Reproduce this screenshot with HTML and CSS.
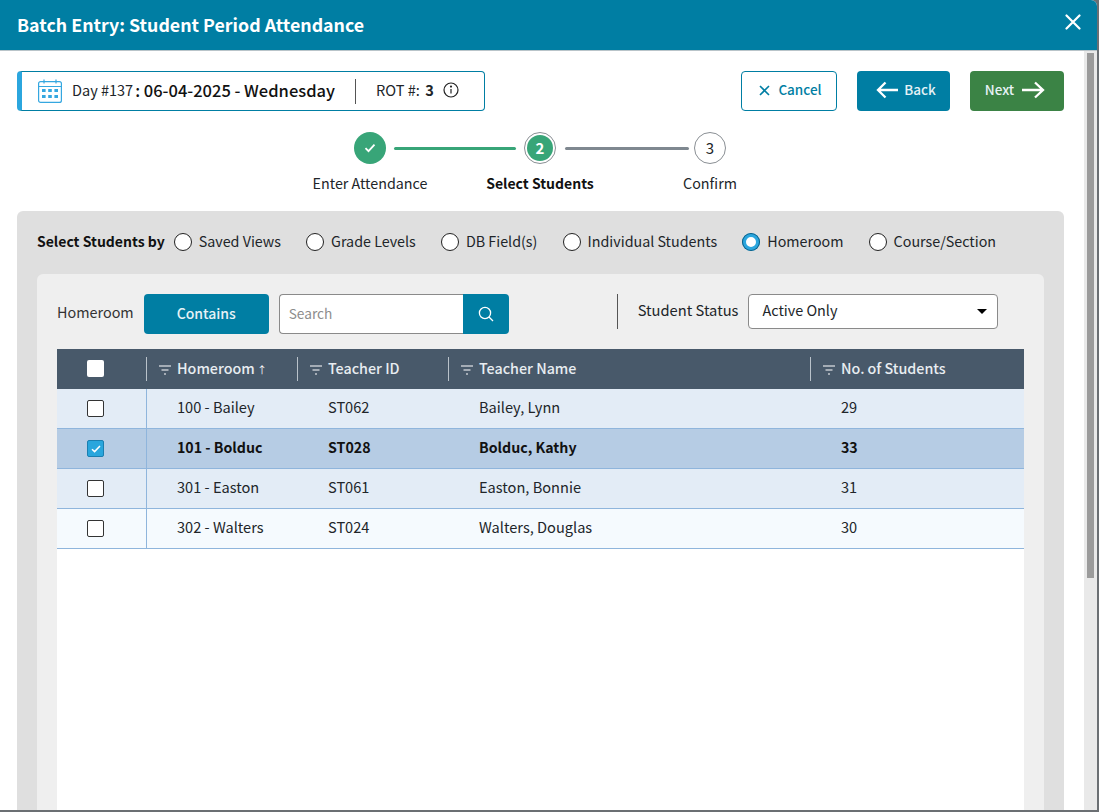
FILE: index.html
```html
<!DOCTYPE html>
<html lang="en">
<head>
<meta charset="utf-8">
<title>Batch Entry: Student Period Attendance</title>
<link rel="stylesheet" href="styles.css">
</head>
<body>
<div class="modal">
  <header class="modal-head">
    <h1 class="modal-title">Batch Entry: Student Period Attendance</h1>
    <svg class="close-icon" width="16" height="16" viewBox="0 0 16 16"><path d="M1.5 1.5l13 13M14.5 1.5l-13 13" stroke="#fff" stroke-width="2.2" stroke-linecap="round" fill="none"/></svg>
  </header>
  <div class="modal-main">
    <div class="content">
      <div class="topbar">
        <div class="daybox">
          <svg class="cal" width="24" height="24" viewBox="0 0 24 24" fill="none" stroke="#35a7e0" stroke-width="1.2"><rect x="0.6" y="2.6" width="22.8" height="20.8" rx="2"/><path d="M0.6 7.5h22.8M6 0.5v4M18 0.5v4"/><g fill="#35a7e0" stroke="none"><rect x="4" y="10" width="3.6" height="3"/><rect x="10.2" y="10" width="3.6" height="3"/><rect x="16.4" y="10" width="3.6" height="3"/><rect x="4" y="16" width="3.6" height="3"/><rect x="10.2" y="16" width="3.6" height="3"/><rect x="16.4" y="16" width="3.6" height="3"/></g></svg>
          <span class="day-num">Day #137</span>
          <span class="day-date">: 06-04-2025 - Wednesday</span>
          <span class="day-sep"></span>
          <span class="rot">ROT #: <b>3</b></span>
          <svg class="info" width="16" height="16" viewBox="0 0 16 16" fill="none" stroke="#222" stroke-width="1.2"><circle cx="8" cy="8" r="7"/><path d="M8 7v4.5"/><circle cx="8" cy="4.6" r="0.5" fill="#222"/></svg>
        </div>
        <div class="actions">
          <button class="btn btn-cancel"><svg width="11" height="11" viewBox="0 0 11 11"><path d="M1 1l9 9M10 1l-9 9" stroke="#007ea3" stroke-width="1.6" fill="none"/></svg><span>Cancel</span></button>
          <button class="btn btn-back"><svg width="24" height="18" viewBox="0 0 24 18"><path d="M23 9H3M10.500 1.500L3 9l7.500 7.500" stroke="#fff" stroke-width="2.300" fill="none"/></svg><span>Back</span></button>
          <button class="btn btn-next"><span>Next</span><svg width="24" height="18" viewBox="0 0 24 18"><path d="M1 9h21M14 1.500L22 9l-8 7.500" stroke="#fff" stroke-width="2.300" fill="none"/></svg></button>
        </div>
      </div>

      <div class="stepper">
        <div class="step-track">
          <span class="dot dot-done"><svg width="12" height="10" viewBox="0 0 12 10"><path d="M1.500 5.200l3 3 6-6.500" stroke="#fff" stroke-width="1.800" fill="none"/></svg></span>
          <span class="line line-done"></span>
          <span class="dot dot-current"><span>2</span></span>
          <span class="line line-todo"></span>
          <span class="dot dot-todo"><span>3</span></span>
        </div>
        <div class="step-labels">
          <span>Enter Attendance</span>
          <span class="on">Select Students</span>
          <span>Confirm</span>
        </div>
      </div>

      <section class="panel">
        <div class="selectors">
          <span class="sel-title">Select Students by</span>
          <label class="radio"><i></i><span>Saved Views</span></label>
          <label class="radio"><i></i><span>Grade Levels</span></label>
          <label class="radio"><i></i><span>DB Field(s)</span></label>
          <label class="radio"><i></i><span>Individual Students</span></label>
          <label class="radio checked"><i></i><span>Homeroom</span></label>
          <label class="radio"><i></i><span>Course/Section</span></label>
        </div>
        <div class="inner">
          <div class="filters">
            <span class="f-label">Homeroom</span>
            <button class="btn-contains">Contains</button>
            <div class="search">
              <span class="search-input">Search</span>
              <span class="search-btn"><svg width="16" height="16" viewBox="0 0 16 16" fill="none" stroke="#fff" stroke-width="1.300"><circle cx="7" cy="7" r="5.600"/><path d="M11 11l4 4"/></svg></span>
            </div>
            <span class="f-sep"></span>
            <span class="status-label">Student Status</span>
            <div class="select"><span>Active Only</span><i class="caret"></i></div>
          </div>
          <div class="table">
            <div class="row head">
              <div class="cell cb"><i class="box"></i></div>
              <div class="cell"><svg class="flt" width="12" height="10" viewBox="0 0 12 10"><path d="M0 1h12M2.500 5h7M5 9h2" stroke="#fff" stroke-width="1.200"/></svg><span>Homeroom <span class="arrow">↑</span></span></div>
              <div class="cell"><svg class="flt" width="12" height="10" viewBox="0 0 12 10"><path d="M0 1h12M2.500 5h7M5 9h2" stroke="#fff" stroke-width="1.200"/></svg><span>Teacher ID</span></div>
              <div class="cell"><svg class="flt" width="12" height="10" viewBox="0 0 12 10"><path d="M0 1h12M2.500 5h7M5 9h2" stroke="#fff" stroke-width="1.200"/></svg><span>Teacher Name</span></div>
              <div class="cell"><svg class="flt" width="12" height="10" viewBox="0 0 12 10"><path d="M0 1h12M2.500 5h7M5 9h2" stroke="#fff" stroke-width="1.200"/></svg><span>No. of Students</span></div>
            </div>
            <div class="row body alt">
              <div class="cell cb"><i class="box"></i></div><div class="cell">100 - Bailey</div><div class="cell">ST062</div><div class="cell">Bailey, Lynn</div><div class="cell">29</div>
            </div>
            <div class="row body selected">
              <div class="cell cb"><i class="box box-on"><svg width="10" height="8" viewBox="0 0 10 8"><path d="M1 4.200l2.600 2.400L9 1" stroke="#fff" stroke-width="1.500" fill="none"/></svg></i></div><div class="cell">101 - Bolduc</div><div class="cell">ST028</div><div class="cell">Bolduc, Kathy</div><div class="cell">33</div>
            </div>
            <div class="row body alt">
              <div class="cell cb"><i class="box"></i></div><div class="cell">301 - Easton</div><div class="cell">ST061</div><div class="cell">Easton, Bonnie</div><div class="cell">31</div>
            </div>
            <div class="row body plain">
              <div class="cell cb"><i class="box"></i></div><div class="cell">302 - Walters</div><div class="cell">ST024</div><div class="cell">Walters, Douglas</div><div class="cell">30</div>
            </div>
          </div>
        </div>
      </section>
    </div>
    <div class="scrollbar"><div class="thumb"></div></div>
  </div>
</div>
</body>
</html>
```
FILE: styles.css
```css
* { box-sizing: border-box; }
html, body { margin: 0; height: 100%; overflow: hidden; }
body {
  background: #6b6f73;
  font-family: "Noto Sans CJK SC", "Noto Sans", sans-serif;
  font-size: 14.4px;
  color: #212529;
}
i { display: block; font-style: normal; }
button { font-family: inherit; border: 0; padding: 0; }

.modal {
  width: 1097px;
  height: 810px;
  background: #fff;
  border-top-right-radius: 6px;
  display: flex;
  flex-direction: column;
  overflow: hidden;
}
.modal-head {
  height: 51px;
  flex: none;
  background: #007ea3;
  border-bottom: 1px solid #b9c4c9;
  display: flex;
  align-items: center;
  justify-content: space-between;
  padding: 0 16px 0 17px;
}
.modal-title { margin: 0; font-size: 17.8px; font-weight: 600; color: #fff; line-height: 1; }
.close-icon { margin-top: -7px; }

.modal-main { flex: 1; display: flex; min-height: 0; }
.content { flex: 1; min-width: 0; padding: 20px 20px 0 17px; overflow: hidden; }
.scrollbar { width: 13px; flex: none; background: #e9e9e9; padding: 2px 3px 0; }
.thumb { height: 525px; background: #9b9b9b; }

.topbar { display: flex; justify-content: space-between; height: 40px; }
.daybox {
  width: 468px;
  display: flex;
  align-items: center;
  border: 1px solid #007ea3;
  border-left: 5px solid #2ba6de;
  border-radius: 4px;
  padding-left: 16px;
  white-space: nowrap;
}
.cal { flex: none; margin-right: 10px; }
.day-num, .day-date, .rot { padding-bottom: 3px; }
.day-num { font-size: 14.5px; }
.day-date { font-size: 16.5px; font-weight: 500; margin-left: 2px; color: #111; }
.day-sep { width: 1px; height: 25px; background: #555; margin: 0 20px; }
.rot { font-size: 14.6px; }
.rot b { font-weight: 600; margin-left: 2px; }
.info { margin-left: 9px; margin-bottom: 2px; }

.actions { display: flex; gap: 20px; }
.btn {
  height: 40px;
  border-radius: 4px;
  display: flex;
  align-items: center;
  justify-content: center;
  font-size: 13.5px;
  font-weight: 500;
}
.btn span { padding-bottom: 5px; }
.btn svg { margin-bottom: 2px; }
.btn-cancel { width: 96px; background: #fff; border: 1px solid #007ea3; color: #007ea3; gap: 8px; padding-left: 3px; }
.btn-back { width: 93px; background: #007ea3; color: #e6f2f6; gap: 5px; padding-left: 4px; }
.btn-next { width: 94px; background: #3b8345; color: #e6f2f6; gap: 7px; padding-right: 4px; }

.stepper { margin-top: 21px; height: 79px; }
.step-track { display: flex; align-items: center; width: 372px; margin-left: 337px; height: 32px; }
.dot {
  width: 32px;
  height: 32px;
  flex: none;
  border-radius: 50%;
  display: flex;
  align-items: center;
  justify-content: center;
  font-size: 15px;
}
.dot span { padding-bottom: 2px; }
.dot-done { background: #38a578; }
.dot-current { background: #fff; border: 1px solid #8a8f94; padding: 2px; color: #fff; font-weight: 600; }
.dot-current span { width: 100%; height: 100%; border-radius: 50%; background: #38a578; display: flex; align-items: center; justify-content: center; }
.dot-todo { background: #fff; border: 1px solid #8a8f94; }
.line { height: 3px; flex: none; border-radius: 2px; }
.line-done { width: 122px; background: #38a578; margin: 0 8px; }
.line-todo { width: 124px; background: #7f8890; margin: 0 5px 0 9px; }
.step-labels { display: grid; grid-template-columns: repeat(3, 170px); width: 510px; margin: 7px 0 0 268px; text-align: center; font-size: 14.3px; line-height: 24px; }
.step-labels .on { font-size: 14px; font-weight: 600; color: #111; }

.panel {
  background: #dfdfdf;
  border-radius: 6px 6px 0 0;
  padding: 20px 20px 0;
  height: 700px;
}
.selectors { display: flex; align-items: center; height: 22px; font-size: 14.3px; margin-bottom: 21px; white-space: nowrap; }
.sel-title { font-size: 14px; font-weight: 600; color: #111; margin-right: 9px; padding-bottom: 2px; }
.radio { display: flex; align-items: center; gap: 7px; margin-right: 25.15px; }
.radio span { padding-bottom: 4px; }
.radio i { width: 18px; height: 18px; border-radius: 50%; background: #fff; border: 1px solid #222; flex: none; }
.radio.checked i { background: #fff; border: 0; box-shadow: inset 0 0 0 1px #0c5f86, inset 0 0 0 4px #2ba6de; }

.inner { background: #efefef; border-radius: 6px 6px 0 0; padding: 20px 20px 0; height: 600px; }
.filters { display: flex; align-items: flex-start; height: 40px; margin-bottom: 15px; white-space: nowrap; }
.f-label { line-height: 36px; margin-right: 10px; color: #333; }
.btn-contains { width: 125px; height: 40px; background: #007ea3; color: #e6f2f6; border-radius: 4px; font-size: 14px; font-weight: 500; margin-right: 10px; padding-bottom: 2px; }
.search { width: 230px; height: 40px; display: flex; margin-right: 108px; }
.search-input { flex: 1; background: #fff; border: 1px solid #8a8a8a; border-right: 0; border-radius: 4px 0 0 4px; color: #8d8d8d; font-size: 13.7px; line-height: 36px; padding-left: 9px; }
.search-btn { width: 46px; background: #007ea3; border-radius: 0 4px 4px 0; display: flex; align-items: center; justify-content: center; }
.f-sep { width: 1px; height: 35px; background: #555; margin-right: 20px; }
.status-label { font-size: 14.7px; line-height: 32px; margin-right: 10px; }
.select { width: 250px; height: 35px; background: #fff; border: 1px solid #8a8a8a; border-radius: 4px; padding: 0 13px; display: flex; justify-content: space-between; align-items: center; }
.select span { padding-bottom: 4px; }
.caret { width: 0; height: 0; border: 5px solid transparent; border-top: 5px solid #000; border-bottom: 0; margin-right: -3px; }

.table { background: #fff; height: 500px; }
.row { display: grid; grid-template-columns: 89px 151px 151px 362px 214px; height: 40px; }
.cell { display: flex; align-items: center; padding: 0 0 5px 31px; }
.cb { justify-content: flex-start; padding: 0 0 0 30px; }
.box { width: 17px; height: 17px; background: #fff; border: 1px solid #333; border-radius: 2px; display: flex; align-items: center; justify-content: center; }
.head { background: #48596a; color: #e8edf1; font-weight: 500; font-size: 14.3px; }
.head .cell { position: relative; padding-left: 13px; padding-bottom: 4px; }
.head .cb { padding: 0 0 0 30px; }
.head .box { border: 0; margin-top: -2px; }
.head .cell + .cell::before { content: ""; position: absolute; left: 0; top: 8px; bottom: 8px; width: 1px; background: #b9c2ca; }
.flt { margin: 5px 6px 0 0; flex: none; }
.arrow { font-size: 10px; font-weight: 400; color: #fff; margin-left: -1px; }
.body { border-bottom: 1px solid #8fb5dc; font-size: 14.6px; }
.body .cb + .cell { border-left: 1px solid #8fb5dc; padding-left: 30px; }
.alt { background: #e3ecf6; }
.plain { background: #f5fafe; }
.selected { background: #b6cce4; font-weight: 600; font-size: 14.2px; color: #111; }
.selected .cell { padding-bottom: 3px; }
.selected .cb { padding-bottom: 0; }
.box-on { background: #29a6dd; border-color: #1b7fb0; }
```
